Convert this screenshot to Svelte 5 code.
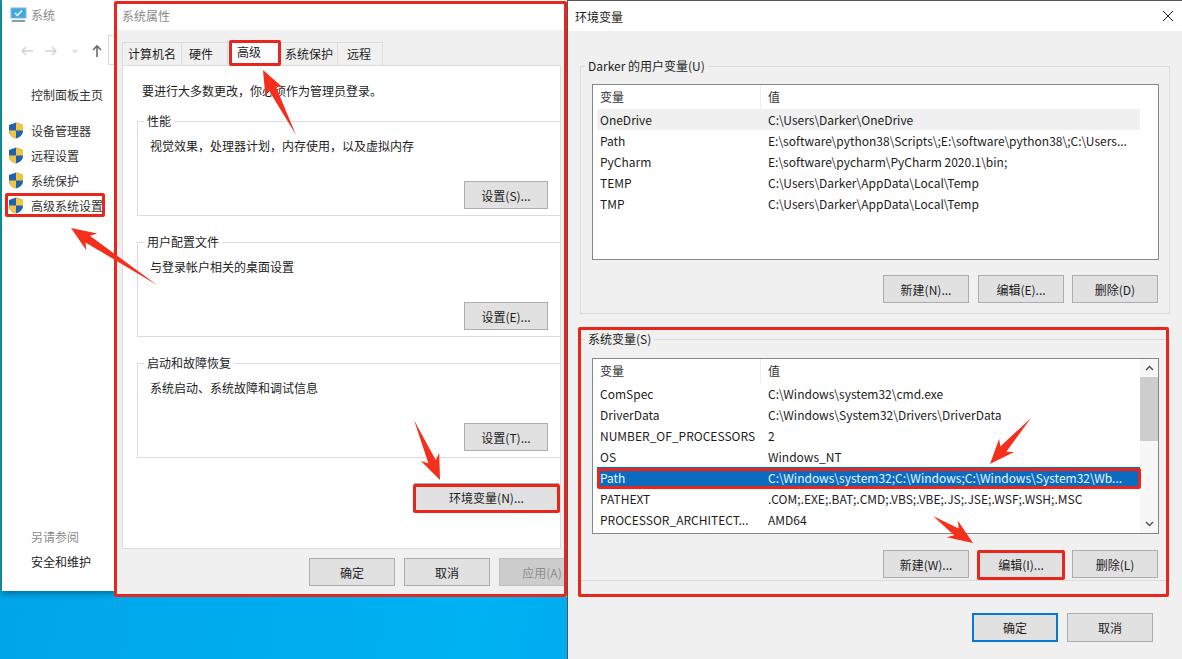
<script>
  const navItems = ['设备管理器', '远程设置', '系统保护', '高级系统设置'];
  const tabs = ['计算机名', '硬件', '高级', '系统保护', '远程'];

  const groups = [
    { title: '性能', desc: '视觉效果，处理器计划，内存使用，以及虚拟内存', btn: '设置(S)...' },
    { title: '用户配置文件', desc: '与登录帐户相关的桌面设置', btn: '设置(E)...' },
    { title: '启动和故障恢复', desc: '系统启动、系统故障和调试信息', btn: '设置(T)...' }
  ];

  const userVars = [
    ['OneDrive', 'C:\\Users\\Darker\\OneDrive'],
    ['Path', 'E:\\software\\python38\\Scripts\\;E:\\software\\python38\\;C:\\Users...'],
    ['PyCharm', 'E:\\software\\pycharm\\PyCharm 2020.1\\bin;'],
    ['TEMP', 'C:\\Users\\Darker\\AppData\\Local\\Temp'],
    ['TMP', 'C:\\Users\\Darker\\AppData\\Local\\Temp']
  ];

  const sysVars = [
    ['ComSpec', 'C:\\Windows\\system32\\cmd.exe'],
    ['DriverData', 'C:\\Windows\\System32\\Drivers\\DriverData'],
    ['NUMBER_OF_PROCESSORS', '2'],
    ['OS', 'Windows_NT'],
    ['Path', 'C:\\Windows\\system32;C:\\Windows;C:\\Windows\\System32\\Wb...'],
    ['PATHEXT', '.COM;.EXE;.BAT;.CMD;.VBS;.VBE;.JS;.JSE;.WSF;.WSH;.MSC'],
    ['PROCESSOR_ARCHITECT...', 'AMD64']
  ];

  // tail point and tip of each red annotation arrow
  const arrows = [
    [296, 135, 263, 70],
    [157, 285, 71, 228],
    [414, 420, 440, 480],
    [1031, 418, 990, 464],
    [933, 516, 973, 543]
  ];

  function arrowPoints([x1, y1, x2, y2]) {
    const len = Math.hypot(x2 - x1, y2 - y1);
    const ux = (x2 - x1) / len, uy = (y2 - y1) / len;
    const nx = -uy, ny = ux;
    const at = (d, w) => `${x2 - ux * d + nx * w},${y2 - uy * d + ny * w}`;
    return [`${x1},${y1}`, at(20, 4), at(25, 10), `${x2},${y2}`, at(25, -10), at(20, -4)].join(' ');
  }

  const marks = [
    { x: 114, y: 1, w: 453, h: 596 },
    { x: 578, y: 327, w: 591, h: 270 },
    { x: 229, y: 40, w: 52, h: 26 },
    { x: 5, y: 193, w: 100, h: 24 },
    { x: 413, y: 484, w: 147, h: 29 },
    { x: 597, y: 468, w: 544, h: 21 },
    { x: 977, y: 550, w: 88, h: 30 }
  ];
</script>

<div class="desktop">
  <section class="win sys">
    <header class="sys-title">
      <svg width="17" height="16" viewBox="0 0 17 16">
        <rect x="1" y="1" width="15" height="10" fill="#3fa9e8" stroke="#8fb8d0" />
        <path d="M5 6l2.500 2.500L12 3.500" fill="none" stroke="#fff" stroke-width="1.500" />
        <rect x="2" y="13" width="13" height="2" fill="#7d9fb5" />
      </svg>
      <span>系统</span>
    </header>
    <div class="sys-nav">
      <svg width="90" height="14" viewBox="0 0 90 14" fill="none" stroke-width="1.400">
        <path d="M22 7H11M15 3L11 7l4 4" stroke="#d2d2d2" transform="translate(-5 0)" />
        <path d="M32 7h11M39 3l4 4-4 4" stroke="#d2d2d2" transform="translate(-3 0)" />
        <path d="M60 6l2 2 2-2" stroke="#d2d2d2" transform="translate(-3 0)" />
        <path d="M83 13V2M79 6l4-4 4 4" stroke="#6a6a6a" stroke-width="1.600" transform="translate(-2 0)" />
      </svg>
      <div class="addr"></div>
    </div>
    <a class="home">控制面板主页</a>
    <ul>
      {#each navItems as item}
        <li>
          <svg width="16" height="17" viewBox="0 0 16 17">
            <path d="M8 .5L15 3v6c0 4-3.500 6.500-7 7.500C4.500 15.500 1 13 1 9V3z" fill="#1f62b4" />
            <path d="M8 .5L15 3v5.500H8zM8 8.500v8C4.500 15.500 1 13 1 8.500z" fill="#f3c53c" />
          </svg>
          <span>{item}</span>
        </li>
      {/each}
    </ul>
    <div class="see-also">
      <p class="muted">另请参阅</p>
      <p>安全和维护</p>
    </div>
  </section>

  <section class="win props">
    <header class="props-title">系统属性</header>
    <div class="tabs">
      {#each tabs as tab}
        <span class="tab" class:active={tab === '高级'}>{tab}</span>
      {/each}
    </div>
    <div class="panel">
      <p class="notice">要进行大多数更改，你必须作为管理员登录。</p>
      {#each groups as group}
        <fieldset class="group">
          <legend>{group.title}</legend>
          <p>{group.desc}</p>
          <button class="btn">{group.btn}</button>
        </fieldset>
      {/each}
      <button class="btn env-btn">环境变量(N)...</button>
    </div>
    <footer class="props-foot">
      <button class="btn">确定</button>
      <button class="btn">取消</button>
      <button class="btn off">应用(A)</button>
    </footer>
  </section>

  <section class="win env">
    <header class="env-title">
      <span>环境变量</span>
      <svg width="12" height="12" viewBox="0 0 12 12"><path d="M1 1l10 10M11 1L1 11" stroke="#222" stroke-width="1" /></svg>
    </header>

    <fieldset class="env-group user">
      <legend>Darker 的用户变量(U)</legend>
      <div class="list">
        <div class="rows">
          <div class="row head"><span>变量</span><span>值</span></div>
          {#each userVars as [name, value], i}
            <div class="row" class:hover={i === 0}><span>{name}</span><span>{value}</span></div>
          {/each}
        </div>
      </div>
      <div class="btn-row">
        <button class="btn">新建(N)...</button>
        <button class="btn">编辑(E)...</button>
        <button class="btn">删除(D)</button>
      </div>
    </fieldset>

    <fieldset class="env-group system">
      <legend>系统变量(S)</legend>
      <div class="list">
        <div class="rows">
          <div class="row head"><span>变量</span><span>值</span></div>
          {#each sysVars as [name, value]}
            <div class="row" class:selected={name === 'Path'}><span>{name}</span><span>{value}</span></div>
          {/each}
        </div>
        <div class="scrollbar">
          <svg width="9" height="6" viewBox="0 0 9 6"><path d="M1 5l3.500-3.500L8 5" fill="none" stroke="#555" stroke-width="1.500" /></svg>
          <div class="track"><div class="thumb"></div></div>
          <svg width="9" height="6" viewBox="0 0 9 6"><path d="M1 1l3.500 3.500L8 1" fill="none" stroke="#555" stroke-width="1.500" /></svg>
        </div>
      </div>
      <div class="btn-row">
        <button class="btn">新建(W)...</button>
        <button class="btn">编辑(I)...</button>
        <button class="btn">删除(L)</button>
      </div>
    </fieldset>

    <footer class="env-foot">
      <button class="btn primary">确定</button>
      <button class="btn">取消</button>
    </footer>
  </section>

  <!-- red annotations drawn over the screenshot -->
  {#each marks as m}
    <div class="mark" style="left:{m.x}px;top:{m.y}px;width:{m.w}px;height:{m.h}px"></div>
  {/each}
  <svg class="arrows" width="1182" height="659" viewBox="0 0 1182 659">
    {#each arrows as a}
      <polygon points={arrowPoints(a)} fill="#f4301c" />
    {/each}
  </svg>
</div>

<style>
  :global(body) { margin: 0; }
  .desktop {
    position: relative;
    width: 1182px;
    height: 659px;
    overflow: hidden;
    background: linear-gradient(100deg, #00a2e6 0%, #00b2f2 45%, #008fe6 100%);
    font-family: "Noto Sans CJK SC", "Open Sans", sans-serif;
    font-size: 12px;
    color: #1c1c1c;
  }
  .desktop::before {
    content: '';
    position: absolute;
    left: 0;
    top: 0;
    width: 2px;
    height: 591px;
    background: #0f9aa8;
  }
  p { margin: 0; }
  button { font: inherit; color: inherit; }
  .win { position: absolute; box-sizing: border-box; top: 0; }

  /* system window behind */
  .sys {
    left: 2px;
    width: 114px;
    height: 591px;
    background: #fff;
    box-shadow: 0 3px 6px rgba(0, 0, 0, .3);
    display: flex;
    flex-direction: column;
  }
  .sys-title { display: flex; align-items: center; gap: 4px; height: 29px; padding-left: 8px; color: #8a8a8a; }
  .sys-nav { display: flex; padding: 15px 0 0 14px; height: 20px; position: relative; }
  .addr { width: 6px; height: 30px; margin: -9px 0 0 2px; border: 1px solid #d9d9d9; border-right: 0; box-sizing: border-box; flex: none; }
  .home { margin: 22px 0 0 29px; line-height: 18px; color: #333; }
  ul { list-style: none; margin: 14px 0 0; padding: 0; }
  li { display: flex; align-items: center; gap: 7px; height: 25px; padding-left: 6px; color: #333; }
  .see-also { margin: auto 0 20px 29px; display: flex; flex-direction: column; gap: 7px; line-height: 18px; }
  .muted { color: #8a8a8a; }

  /* system properties */
  .props {
    left: 115px;
    width: 452px;
    height: 597px;
    background: #f0f0f0;
    display: flex;
    flex-direction: column;
    overflow: hidden;
  }
  .props-title { height: 30px; background: #fff; padding-left: 7px; line-height: 32px; color: #8a8a8a; }
  .tabs { display: flex; height: 24px; margin: 11px 0 0 7px; }
  .tab {
    box-sizing: border-box;
    border: 1px solid #dcdcdc;
    border-bottom: 0;
    margin-right: -1px;
    line-height: 22px;
    background: #f0f0f0;
    margin-top: 1px;
    white-space: nowrap;
  }
  .tab:nth-child(1) { width: 60px; padding-left: 5px; }
  .tab:nth-child(2) { width: 47px; padding-left: 7px; }
  .tab.active { width: 53px; padding-left: 9px; background: #fff; margin-top: 0; line-height: 19px; }
  .tab:nth-child(4) { width: 59px; padding-left: 5px; }
  .tab:nth-child(5) { width: 46px; padding-left: 9px; }
  .panel {
    box-sizing: border-box;
    margin-left: 7px;
    width: 439px;
    height: 484px;
    background: #fff;
    border: 1px solid #dcdcdc;
    padding: 15px 0 0 14px;
    display: flex;
    flex-direction: column;
    flex: none;
  }
  .notice { line-height: 20px; margin: 0 0 12px 5px; height: 20px; }
  .group {
    box-sizing: border-box;
    width: 424px;
    height: 103px;
    margin: 0 0 18px 0;
    padding: 7px 12px 0 12px;
    border: 1px solid #dcdcdc;
    display: flex;
    flex-direction: column;
    min-width: 0;
  }
  .group legend { padding: 0 3px; margin-left: -6px; line-height: 16px; }
  .group p { line-height: 20px; }
  .group .btn { align-self: flex-end; width: 84px; margin: 25px 0 0 0; }
  .btn {
    box-sizing: border-box;
    width: 86px;
    height: 28px;
    padding: 0;
    background: #e1e1e1;
    border: 1px solid #adadad;
    flex: none;
  }
  .env-btn { width: 145px; align-self: flex-end; margin: 7px 1px 0 0; }
  .props-foot { display: flex; gap: 9px; padding: 9px 0 0 194px; }
  .off { color: #8c8c8c; background: #ccc; border-color: #bfbfbf; }

  /* environment variables */
  .env {
    left: 567px;
    width: 615px;
    height: 659px;
    background: #f0f0f0;
    border-top: 1px solid #555;
    border-left: 1px solid #555;
  }
  .env-title {
    height: 30px;
    background: #fff;
    display: flex;
    align-items: center;
    justify-content: space-between;
    padding: 0 8px 0 7px;
  }
  .env-group {
    box-sizing: border-box;
    width: 590px;
    margin: 0 0 0 12px;
    padding: 0 11px;
    border: 1px solid #dcdcdc;
    min-width: 0;
    display: flex;
    flex-direction: column;
  }
  .env-group legend { padding: 0 3px; margin-left: -7px; line-height: 16px; }
  .user { margin-top: 27px; height: 256px; padding-top: 10px; }
  .system { margin-top: 17px; height: 250px; padding-top: 11px; }
  .list {
    box-sizing: border-box;
    width: 567px;
    height: 176px;
    flex: none;
    background: #fff;
    border: 1px solid #828790;
    display: flex;
  }
  .rows { flex: 1; min-width: 0; }
  .row {
    display: grid;
    grid-template-columns: 168px 1fr;
    height: 21px;
    line-height: 21px;
    margin-left: 4px;
    padding-left: 3px;
    white-space: nowrap;
    width: 540px;
  }
  .row span { overflow: hidden; }
  .head {
    height: 24px;
    line-height: 24px;
    color: #333;
    background: linear-gradient(90deg, transparent 163px, #eee 163px, #eee 164px, transparent 164px);
  }
  .hover { background: #f0f0f0; }
  .selected { background: #0b6bc0; color: #e8f6ff; }
  .scrollbar {
    width: 18px;
    display: flex;
    flex-direction: column;
    align-items: center;
    background: #f7f7f7;
    flex: none;
    padding: 6px 0;
    box-sizing: border-box;
    margin-left: auto;
  }
  .track { flex: 1; width: 100%; margin: 6px 0 0; }
  .thumb { height: 64px; background: #cdcdcd; }
  .btn-row { display: flex; gap: 9px; justify-content: flex-end; margin: 16px 0 0; }
  .user .btn-row { margin-top: 15px; }
  .btn-row .btn:last-child { margin-left: -1px; }
  .env-foot { display: flex; gap: 9px; margin: 32px 0 0 404px; }
  .env-foot .btn { height: 29px; }
  .primary { border: 2px solid #0a78d2; }

  .mark { position: absolute; box-sizing: border-box; border: 3px solid #e8261c; border-radius: 2px; }
  .arrows { position: absolute; left: 0; top: 0; pointer-events: none; }
</style>
